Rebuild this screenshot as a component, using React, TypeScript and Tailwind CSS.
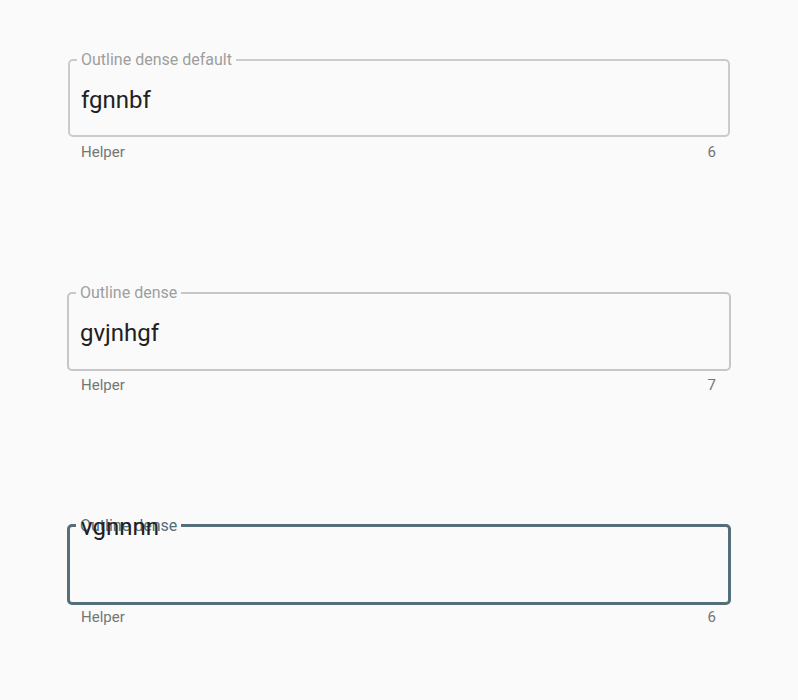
import React from "react";

type FieldProps = {
  label: string;
  value: string;
  count: number;
  state: "default" | "hover" | "focus";
};

function OutlineField({ label, value, count, state }: FieldProps) {
  const focused = state === "focus";
  return (
    <div className={focused ? "" : "h-[232px]"}>
      <fieldset
        className={`rounded-[5px] pl-[7px] pr-[12px] ${
          focused
            ? "mt-[1px] border-[3px] border-[#546e7a] h-[89px] -mx-[1px]"
            : state === "hover"
            ? "mt-[1px] border-2 border-[#c6c6c6] h-[88px] -mx-[1px]"
            : "border-2 border-[#cbcbcb] h-[87px]"
        }`}
      >
        <legend
          className={`px-[4px] text-[16px] leading-[19px] ${
            focused ? "text-[#546e7a] ml-[-1px]" : "text-[#9e9e9e]"
          }`}
        >
          {label}
        </legend>
        <div
          className={`pl-[4px] text-[24px] leading-[28px] text-[#212121] ${
            focused ? "-mt-[22px]" : "mt-[17px]"
          }`}
        >
          {value}
        </div>
      </fieldset>
      <div
        className={`flex justify-between pl-[13px] pr-[14px] text-[15px] leading-[20px] text-[#757575] ${
          focused ? "pt-[2px]" : state === "hover" ? "pt-[4px]" : "pt-[5px]"
        }`}
      >
        <span>Helper</span>
        <span>{count}</span>
      </div>
    </div>
  );
}

export default function App() {
  return (
    <div
      className="min-h-[700px] bg-[#fafafa] px-[68px] pt-[50px]"
      style={{ fontFamily: "Roboto, 'Liberation Sans', sans-serif" }}
    >
      <OutlineField label="Outline dense default" value="fgnnbf" count={6} state="default" />
      <OutlineField label="Outline dense" value="gvjnhgf" count={7} state="hover" />
      <OutlineField label="Outline dense" value="vgnnnn" count={6} state="focus" />
    </div>
  );
}
